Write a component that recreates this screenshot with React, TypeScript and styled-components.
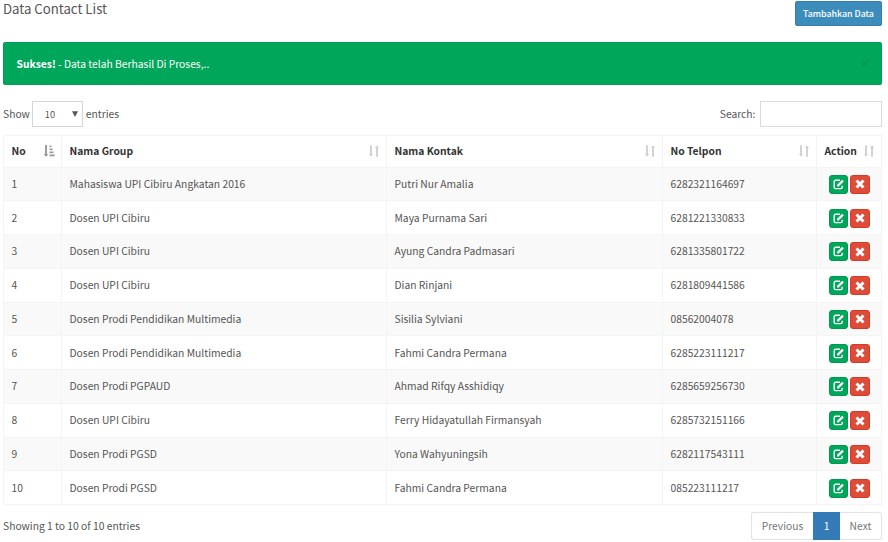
import React from "react";
import styled, { createGlobalStyle } from "styled-components";

const GlobalStyle = createGlobalStyle`
  * { box-sizing: border-box; }
  body {
    margin: 0;
    background: #fff;
    color: #555;
    font: 10.3px/16px "Noto Sans CJK SC", "Open Sans", sans-serif;
    overflow: hidden;
  }
  button, input { font: inherit; letter-spacing: inherit; }
`;

const Page = styled.main`
  display: flex;
  flex-direction: column;
  width: 888px;
  height: 542px;
  padding: 0 6px 0 3px;
`;

const Header = styled.header`
  display: flex;
  justify-content: space-between;
  height: 42px;
`;

const Title = styled.h1`
  margin: 0;
  font-size: 13.2px;
  line-height: 17px;
  font-weight: 400;
`;

const AddButton = styled.button`
  width: 87px;
  height: 25px;
  margin-top: 1px;
  padding: 0;
  border: 1px solid #367fa9;
  border-radius: 2px;
  background: #3c8dbc;
  color: #fff;
  font-size: 8.8px;
  font-weight: 500;
  white-space: nowrap;
`;

const Alert = styled.div`
  display: flex;
  align-items: center;
  justify-content: space-between;
  height: 43px;
  padding: 0 13px 0 12.5px;
  border: 1px solid #009f55;
  border-radius: 2px;
  background: #00a65a;
  color: #fff;
`;

const CloseButton = styled.button`
  display: flex;
  padding: 0;
  border: 0;
  background: none;
  color: #00853f;
`;

const Controls = styled.div`
  display: flex;
  align-items: center;
  justify-content: space-between;
  height: 26px;
  margin: 16px 0 8px;
`;

const Label = styled.label`
  display: flex;
  align-items: center;
  height: 100%;
`;

const LengthSelect = styled.span`
  display: flex;
  align-items: center;
  justify-content: space-between;
  width: 51px;
  height: 26px;
  margin: 0 3px 0 2px;
  padding: 0 4px 0 12px;
  border: 1px solid #d2d6de;
  font-size: 9.3px;
`;

const SearchInput = styled.input`
  width: 122px;
  height: 26px;
  margin-left: 4.5px;
  border: 1px solid #d8dbe0;
  background: #fff;
`;

const Table = styled.div`
  display: grid;
  grid-template-rows: 31.5px repeat(10, 33.75px);
  height: 370px;
  border: 1px solid #f4f4f4;
  border-bottom: 0;
`;

const Row = styled.div<{ $striped?: boolean }>`
  display: grid;
  grid-template-columns: 58px 325px 276px 154px 1fr;
  border-bottom: 1px solid #f4f4f4;
  background: ${(p) => (p.$striped ? "#f9f9f9" : "#fff")};
`;

const Cell = styled.div`
  display: flex;
  align-items: center;
  padding: 0 7px 0 7.5px;
  border-right: 1px solid #f4f4f4;
  white-space: nowrap;
  &:last-child { border-right: 0; }
`;

const HeadCell = styled(Cell)`
  justify-content: space-between;
  padding-right: 6px;
  color: #333;
  font-weight: 700;
`;

const Actions = styled(Cell)`
  gap: 2px;
  padding: 1px 0 0 12px;
`;

const ActionButton = styled.button<{ $danger?: boolean }>`
  display: flex;
  align-items: center;
  justify-content: center;
  width: ${(p) => (p.$danger ? 20 : 19)}px;
  height: 19px;
  padding: 0;
  border: 1px solid ${(p) => (p.$danger ? "#d73925" : "#009a52")};
  border-radius: 3px;
  background: ${(p) => (p.$danger ? "#dd4b39" : "#00a65a")};
  color: #fff;
`;

const Footer = styled.footer`
  display: flex;
  justify-content: space-between;
  padding-top: 7px;
`;

const Info = styled.span`
  padding-top: 6px;
`;

const Pagination = styled.nav`
  display: flex;
  height: 28px;
`;

const PageButton = styled.button<{ $active?: boolean; $width: number }>`
  width: ${(p) => p.$width}px;
  padding: 0;
  border: 1px solid ${(p) => (p.$active ? "#337ab7" : "#e3e3e3")};
  background: ${(p) => (p.$active ? "#337ab7" : "#fff")};
  color: ${(p) => (p.$active ? "#fff" : "#777")};
  &:first-child { border-right: 0; border-radius: 3px 0 0 3px; }
  &:last-child { border-left: 0; border-radius: 0 3px 3px 0; }
`;

const SortIcon = () => (
  <svg width="12" height="12" viewBox="0 0 12 12" fill="#d3d3d3">
    <path d="M2 .3h2V9h1.2L3 11.8.8 9H2zM8 11.7V3H6.8L9 .2 11.2 3H10v8.7z" />
  </svg>
);

const SortAscIcon = () => (
  <svg width="12" height="12" viewBox="0 0 12 12" fill="#9c9c9c">
    <path d="M2 0h2v9h1.4L3 12 .6 9H2zM6.5.5h2v1.8h-2zM6.5 3.5h3v1.8h-3zM6.5 6.5h4v1.8h-4zM6.5 9.5h5.2v1.8H6.5z" />
  </svg>
);

const EditIcon = () => (
  <svg width="11" height="11" viewBox="0 0 11 11" fill="none" stroke="#fff">
    <path d="M7 1.3H2.6Q1.2 1.3 1.2 2.7v5.5q0 1.4 1.4 1.4h5.2q1.4 0 1.4-1.4V6.8" strokeWidth="1.4" />
    <path d="M5 6.5 10 1.6" strokeWidth="2.3" />
    <path d="M4.1 5.2v2.2h2.2z" fill="#fff" stroke="none" />
  </svg>
);

const RemoveIcon = () => (
  <svg width="10" height="10" viewBox="0 0 10 10" fill="none" stroke="#fff">
    <path d="m1.5 1.5 7 7m0-7-7 7" strokeWidth="2.9" />
  </svg>
);

const columns = ["No", "Nama Group", "Nama Kontak", "No Telpon", "Action"];

const contacts = [
  ["Mahasiswa UPI Cibiru Angkatan 2016", "Putri Nur Amalia", "6282321164697"],
  ["Dosen UPI Cibiru", "Maya Purnama Sari", "6281221330833"],
  ["Dosen UPI Cibiru", "Ayung Candra Padmasari", "6281335801722"],
  ["Dosen UPI Cibiru", "Dian Rinjani", "6281809441586"],
  ["Dosen Prodi Pendidikan Multimedia", "Sisilia Sylviani", "08562004078"],
  ["Dosen Prodi Pendidikan Multimedia", "Fahmi Candra Permana", "6285223111217"],
  ["Dosen Prodi PGPAUD", "Ahmad Rifqy Asshidiqy", "6285659256730"],
  ["Dosen UPI Cibiru", "Ferry Hidayatullah Firmansyah", "6285732151166"],
  ["Dosen Prodi PGSD", "Yona Wahyuningsih", "6282117543111"],
  ["Dosen Prodi PGSD", "Fahmi Candra Permana", "085223111217"],
];

export default function App() {
  return (
    <Page>
      <GlobalStyle />
      <Header>
        <Title>Data Contact List</Title>
        <AddButton>Tambahkan Data</AddButton>
      </Header>
      <Alert role="alert">
        <span><strong>Sukses!</strong> - Data telah Berhasil Di Proses,..</span>
        <CloseButton aria-label="Close">
          <svg width="7" height="7" viewBox="0 0 7 7" stroke="currentColor">
            <path d="m1 1 5 5m0-5-5 5" />
          </svg>
        </CloseButton>
      </Alert>
      <Controls>
        <Label>
          Show
          <LengthSelect>
            10
            <svg width="6" height="6" viewBox="0 0 6 6" fill="#555"><path d="M0 .3h6L3 6z" /></svg>
          </LengthSelect>
          entries
        </Label>
        <Label>Search:<SearchInput /></Label>
      </Controls>
      <Table>
        <Row>
          {columns.map((name, i) => (
            <HeadCell key={name}>{name}{i === 0 ? <SortAscIcon /> : <SortIcon />}</HeadCell>
          ))}
        </Row>
        {contacts.map(([group, name, phone], i) => (
          <Row key={phone} $striped={i % 2 === 0}>
            <Cell>{i + 1}</Cell>
            <Cell>{group}</Cell>
            <Cell>{name}</Cell>
            <Cell>{phone}</Cell>
            <Actions>
              <ActionButton aria-label="Edit"><EditIcon /></ActionButton>
              <ActionButton $danger aria-label="Delete"><RemoveIcon /></ActionButton>
            </Actions>
          </Row>
        ))}
      </Table>
      <Footer>
        <Info>Showing 1 to 10 of 10 entries</Info>
        <Pagination>
          <PageButton $width={62}>Previous</PageButton>
          <PageButton $width={27} $active>1</PageButton>
          <PageButton $width={42}>Next</PageButton>
        </Pagination>
      </Footer>
    </Page>
  );
}
